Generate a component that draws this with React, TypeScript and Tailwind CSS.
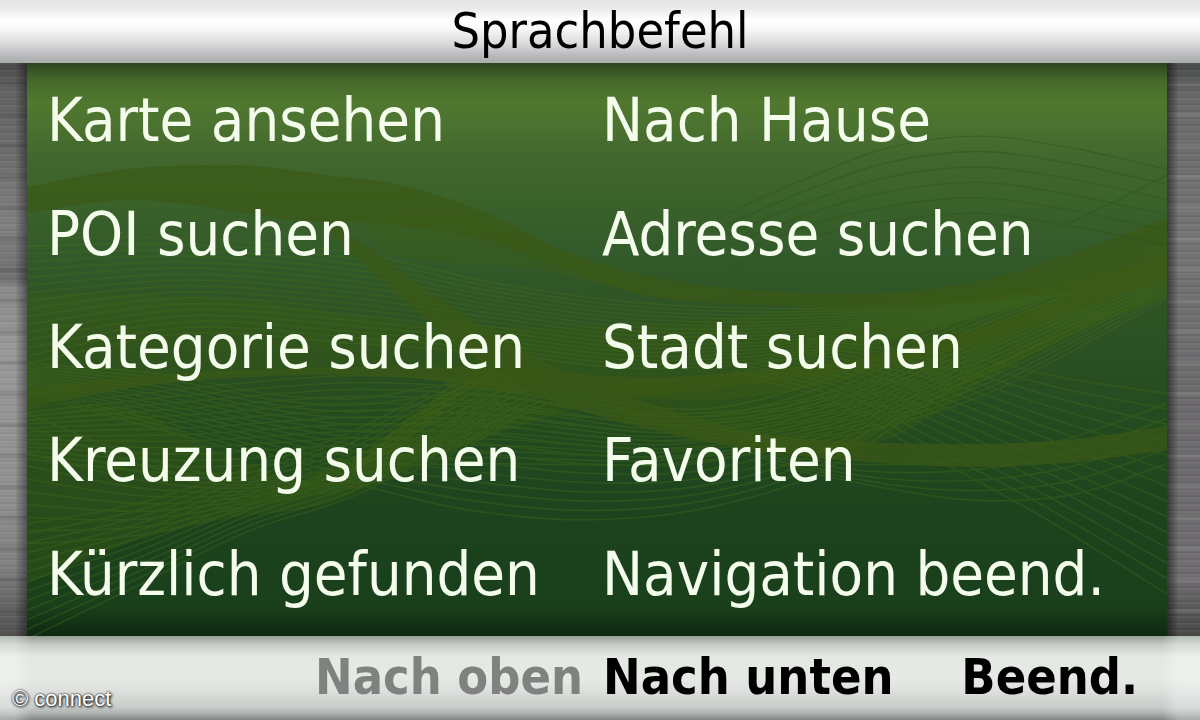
type Point = [number, number]

const commands = [
    "Karte ansehen", "Nach Hause",
    "POI suchen", "Adresse suchen",
    "Kategorie suchen", "Stadt suchen",
    "Kreuzung suchen", "Favoriten",
    "Kürzlich gefunden", "Navigation beend.",
]

// smooth path through all points
function curve(p: Point[], start = "M") {
    let d = `${start}${p[0][0]} ${p[0][1]}`
    for (let i = 0; i < p.length - 1; i++) {
        const a = p[i - 1] ?? p[i]
        const b = p[i]
        const c = p[i + 1]
        const e = p[i + 2] ?? c
        d += `C${b[0] + (c[0] - a[0]) / 6} ${b[1] + (c[1] - a[1]) / 6} ${c[0] - (e[0] - b[0]) / 6} ${c[1] - (e[1] - b[1]) / 6} ${c[0]} ${c[1]}`
    }
    return d
}

// n curves blended from one line to the other
function blend(from: Point[], to: Point[], n: number) {
    return Array.from({ length: n }, (_, i) => {
        const t = i / (n - 1)
        return curve(from.map(([x, y], k) => [x + (to[k][0] - x) * t, y + (to[k][1] - y) * t] as Point))
    })
}

const band = (top: Point[], bottom: Point[]) => curve(top) + curve([...bottom].reverse(), "L") + "Z"

const bands = [
    band([[0, 124], [90, 107], [170, 102], [230, 103], [300, 112], [370, 121], [450, 146], [540, 189], [640, 216], [760, 229], [880, 228], [990, 208], [1140, 155]],
        [[0, 150], [90, 137], [150, 140], [210, 149], [280, 158], [350, 160], [440, 172], [510, 195], [620, 232], [760, 243], [880, 245], [990, 234], [1140, 222]]),
    band([[290, 150], [350, 190], [420, 240], [520, 300], [640, 345], [750, 372], [900, 380], [1030, 377], [1140, 362]],
        [[290, 155], [330, 195], [400, 256], [490, 322], [600, 360], [740, 388], [900, 402], [1030, 400], [1140, 386]]),
    band([[0, 325], [120, 312], [260, 305], [380, 303], [500, 306], [620, 314], [740, 306], [850, 292], [960, 262], [1140, 200]],
        [[0, 345], [120, 322], [260, 312], [380, 314], [500, 330], [620, 332], [700, 324], [850, 303], [970, 274], [1140, 214]]),
]

// soft fills under the dense parts of the mesh
const washes = [
    band([[330, 150], [450, 150], [540, 190], [620, 230]], [[350, 190], [420, 200], [500, 205], [620, 232]]),
    band([[0, 230], [200, 235], [400, 260], [600, 262], [800, 243], [1140, 200]], [[0, 335], [200, 312], [400, 305], [600, 335], [800, 320], [1140, 214]]),
    band([[560, 320], [740, 306], [850, 292], [960, 262], [1140, 190]], [[600, 355], [780, 390], [860, 362], [960, 310], [1140, 228]]),
    band([[0, 345], [100, 345], [200, 390], [300, 418], [380, 355], [450, 312]], [[0, 520], [100, 480], [200, 455], [300, 440], [400, 395], [560, 340]]),
    band([[780, 385], [860, 360], [950, 310], [1040, 265], [1140, 228]], [[790, 390], [870, 372], [960, 316], [1050, 270], [1140, 232]]),
    band([[270, 420], [340, 385], [390, 350], [440, 312], [520, 308]], [[280, 424], [350, 396], [405, 358], [450, 322], [520, 325]]),
]

const lines = [
    ...blend([[0, 175], [160, 175], [330, 190], [470, 220], [620, 240], [800, 245], [960, 235], [1140, 200]],
        [[0, 300], [160, 270], [330, 280], [470, 290], [620, 305], [800, 290], [960, 250], [1140, 205]], 17),
    ...blend([[0, 345], [160, 325], [330, 312], [480, 322], [640, 350], [800, 330], [960, 265], [1140, 190]],
        [[0, 395], [160, 410], [330, 402], [480, 400], [640, 400], [800, 376], [960, 330], [1140, 235]], 14),
    ...blend([[0, 330], [130, 365], [240, 395], [330, 420], [440, 446], [560, 456], [680, 444], [800, 405], [950, 310], [1140, 225]],
        [[0, 300], [130, 310], [240, 330], [330, 335], [440, 320], [560, 335], [680, 345], [800, 315], [950, 250], [1140, 180]], 14),
    ...blend([[0, 460], [110, 440], [220, 405], [320, 370], [400, 330], [460, 300]],
        [[0, 575], [110, 522], [220, 468], [320, 435], [400, 395], [520, 340]], 13),
    ...blend([[0, 350], [120, 395], [240, 415], [380, 380], [460, 330]],
        [[0, 480], [120, 470], [240, 440], [380, 410], [500, 350]], 11),
    ...blend([[780, 275], [860, 285], [950, 295], [1040, 315], [1140, 330]],
        [[700, 310], [800, 335], [890, 385], [1010, 450], [1140, 530]], 14),
    ...blend([[700, 382], [820, 400], [940, 396], [1040, 375], [1140, 340]],
        [[760, 405], [880, 428], [960, 437], [1050, 430], [1140, 400]], 5),
]

const arcs = blend([[700, 150], [780, 115], [860, 85], [950, 73], [1040, 84], [1140, 106]],
    [[700, 205], [780, 175], [860, 158], [950, 150], [1040, 162], [1140, 182]], 6)

function Waves() {
    return (
        <svg className="absolute inset-0 h-full w-full" viewBox="0 0 1140 572" preserveAspectRatio="none" aria-hidden="true">
            <g fill="#3d5e12">
                {washes.map((d, i) => <path key={i} d={d} opacity={0.32} />)}
            </g>
            <g fill="none" stroke="#48701a" strokeWidth={1.6} opacity={0.34}>
                {lines.map((d, i) => <path key={i} d={d} />)}
            </g>
            <g fill="#3b5916" opacity={0.7}>
                {bands.map((d, i) => <path key={i} d={d} />)}
            </g>
            <g fill="none" stroke="#2f561c" strokeWidth={1.4} opacity={0.5}>
                {arcs.map((d, i) => <path key={i} d={d} />)}
                <path d={curve([[1030, 165], [1080, 142], [1140, 112]])} />
            </g>
        </svg>
    )
}

export default function App() {
    return (
        <div className="flex min-h-screen flex-col bg-[#777] font-['DejaVu_Sans_Condensed','DejaVu_Sans',sans-serif]">
            <header className="flex h-[63px] items-center justify-center bg-[linear-gradient(#e4e4e4_0%,#ececec_15%,#ffffff_32%,#f8f8f8_45%,#dcdcdc_68%,#b8babd_88%,#a9adab_100%)] pb-0.5">
                <h1 className="text-[50px] leading-none text-black">Sprachbefehl</h1>
            </header>

            <main className="flex flex-1">
                <div className="w-[27px] bg-[linear-gradient(90deg,transparent_55%,#00000066),repeating-linear-gradient(#ffffff0d_0_1px,transparent_2px_5px,#0000000d_6px_7px),repeating-linear-gradient(transparent_0_18px,#0000001a_20px_22px,transparent_24px_31px),linear-gradient(#484848,#626262_4%,#6c6c6c_15%,#808080_28%,#707070_38%,#8a8a8a_39%,#999_50%,#909090_75%,#808080_88%,#505050)]" />
                <div className="relative flex flex-1 bg-[linear-gradient(#2c4420_0%,#46692a_3%,#50782f_7%,#4b7230_11%,#43672e_16%,#3c632a_23%,#32592a_34%,#2d5224_46%,#23491f_64%,#1d431e_80%,#1a3f1b_95%,#0f2811_100%)]">
                    <Waves />
                    <ul className="relative grid flex-1 grid-cols-[555px_1fr] grid-rows-5 pb-1.5 pl-5">
                        {commands.map((command) => (
                            <li key={command} className="flex items-center">
                                <button className="cursor-pointer whitespace-nowrap text-[61px] leading-none text-[#f4fcec]">{command}</button>
                            </li>
                        ))}
                    </ul>
                </div>
                <div className="w-[33px] bg-[linear-gradient(90deg,#00000080,transparent_35%),repeating-linear-gradient(#ffffff0d_0_1px,transparent_2px_5px,#00000014_6px_7px),repeating-linear-gradient(transparent_0_18px,#ffffff14_20px_22px,transparent_24px_31px),linear-gradient(#484a4b,#6a6a6a_6%,#747474_30%,#6c6a6d_60%,#706d70_90%,#484848)]" />
            </main>

            <footer className="relative grid h-[84px] grid-cols-[603px_1fr] items-center bg-[linear-gradient(90deg,#ffffff4d_0_14px,transparent_32px_calc(100%-38px),#ffffff4d_calc(100%-22px)),linear-gradient(#969e94_0%,#c4cac3_10%,#e4e8e3_24%,#e6eae5_50%,#dde0dd_65%,#c8ccc9_85%,#a8acaa_93%,#808482_100%)] pb-0.5 text-[50px] font-bold leading-none">
                <button className="justify-self-end pr-5 text-[#808280]" disabled>Nach oben</button>
                <div className="flex items-center justify-between pr-[62px] text-black">
                    <button className="cursor-pointer">Nach unten</button>
                    <button className="cursor-pointer">Beend.</button>
                </div>
                <small className="absolute bottom-2.5 left-3 font-['Liberation_Sans',sans-serif] text-[22px] font-normal text-white [text-shadow:0_0_2px_#000,1px_1px_3px_#000]">© connect</small>
            </footer>
        </div>
    )
}
